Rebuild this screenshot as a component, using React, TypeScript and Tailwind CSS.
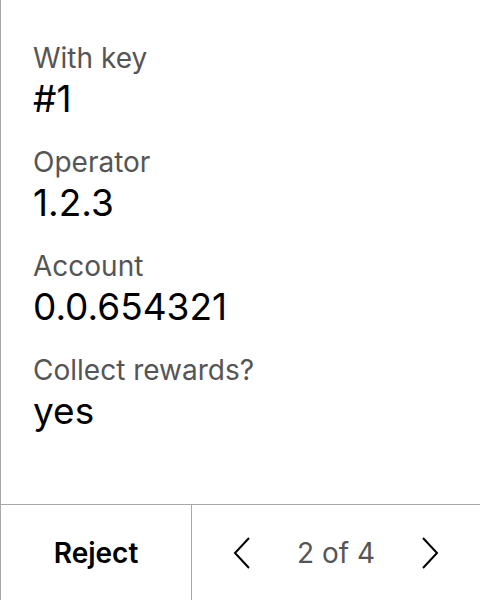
const rows = [
  { label: "With key", value: "#1" },
  { label: "Operator", value: "1.2.3" },
  { label: "Account", value: "0.0.654321" },
  { label: "Collect rewards?", value: "yes" },
];

function Chevron({ dir }: { dir: "left" | "right" }) {
  return (
    <svg width="18" height="32" viewBox="0 0 18 32" fill="none" stroke="#000" strokeWidth="2">
      {dir === "left" ? <path d="M16 1 L2 16 L16 31" /> : <path d="M2 1 L16 16 L2 31" />}
    </svg>
  );
}

export default function App() {
  return (
    <div
      className="flex h-[600px] w-[480px] flex-col border-l border-[#a8a8a8] bg-white text-black"
      style={{ fontFamily: "Inter, 'Noto Sans', sans-serif" }}
    >
      <div className="flex flex-1 flex-col gap-[22px] px-8 pt-[37px]">
        {rows.map((row) => (
          <div key={row.label} className="flex flex-col">
            <span className="text-[28px] leading-[42px] text-[#555]">{row.label}</span>
            <span className="text-[37px] leading-[40px]">{row.value}</span>
          </div>
        ))}
      </div>
      <div className="flex h-[96px] border-t border-[#a8a8a8]">
        <div className="flex w-[191px] items-center justify-center border-r border-[#a8a8a8] text-[28px] font-semibold">
          Reject
        </div>
        <div className="flex flex-1 items-center justify-between px-[41px]">
          <Chevron dir="left" />
          <span className="text-[28px] text-[#555]">2 of 4</span>
          <Chevron dir="right" />
        </div>
      </div>
    </div>
  );
}
